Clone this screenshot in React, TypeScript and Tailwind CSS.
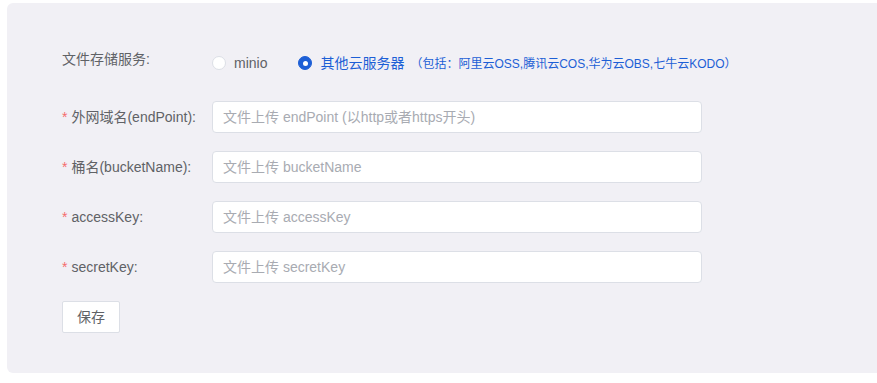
import React, { useState } from 'react'

const fields = [
  { label: '外网域名(endPoint):', placeholder: '文件上传 endPoint (以http或者https开头)' },
  { label: '桶名(bucketName):', placeholder: '文件上传 bucketName' },
  { label: 'accessKey:', placeholder: '文件上传 accessKey' },
  { label: 'secretKey:', placeholder: '文件上传 secretKey' },
]

function Radio({ checked, onClick, children }: { checked: boolean; onClick: () => void; children: React.ReactNode }) {
  return (
    <label onClick={onClick} className="flex items-center cursor-pointer">
      <span
        className={`w-[14px] h-[14px] rounded-full flex items-center justify-center border ${
          checked ? 'bg-[#1d5fd6] border-[#1d5fd6]' : 'bg-white border-[#dcdfe6]'
        }`}
      >
        {checked && <span className="w-[5px] h-[5px] rounded-full bg-white" />}
      </span>
      <span className={`ml-[8px] ${checked ? 'text-[#1d5fd6]' : 'text-[#606266]'}`}>{children}</span>
    </label>
  )
}

export default function App() {
  const [storage, setStorage] = useState<'minio' | 'other'>('other')

  return (
    <div
      className="w-full h-[383px] overflow-hidden bg-white pt-[3px]"
      style={{ fontFamily: '"Liberation Sans", "Noto Sans CJK SC", sans-serif' }}
    >
      <div className="ml-[7px] w-[900px] h-[370px] bg-[#f1f0f5] rounded-[6px] pl-[55px] pt-[40px] text-[14px]">
        {/* storage type */}
        <div className="flex h-[32px]">
          <div className="w-[150px] leading-[32px] text-[#606266]">文件存储服务:</div>
          <div className="flex items-center pt-[8px] h-[32px] leading-[20px]">
            <Radio checked={storage === 'minio'} onClick={() => setStorage('minio')}>minio</Radio>
            <div className="w-[31px]" />
            <Radio checked={storage === 'other'} onClick={() => setStorage('other')}>
              其他云服务器
              <span className="ml-[6px] text-[12px]">（包括：阿里云OSS,腾讯云COS,华为云OBS,七牛云KODO）</span>
            </Radio>
          </div>
        </div>

        <div className="mt-[26px] flex flex-col gap-[18px]">
          {fields.map((f) => (
            <div key={f.label} className="flex items-center h-[32px]">
              <div className="w-[150px] text-[#606266]">
                <span className="text-[#f56c6c] mr-[4px]">*</span>
                {f.label}
              </div>
              <input
                placeholder={f.placeholder}
                className="w-[490px] h-[32px] bg-white border border-[#dcdfe6] rounded-[4px] px-[10px] text-[14px] text-[#606266] placeholder:text-[#a8abb2] outline-none"
              />
            </div>
          ))}
          <div>
            <button className="w-[58px] h-[32px] bg-white border border-[#dcdfe6] rounded-[2px] text-[14px] text-[#606266]">
              保存
            </button>
          </div>
        </div>
      </div>
    </div>
  )
}
